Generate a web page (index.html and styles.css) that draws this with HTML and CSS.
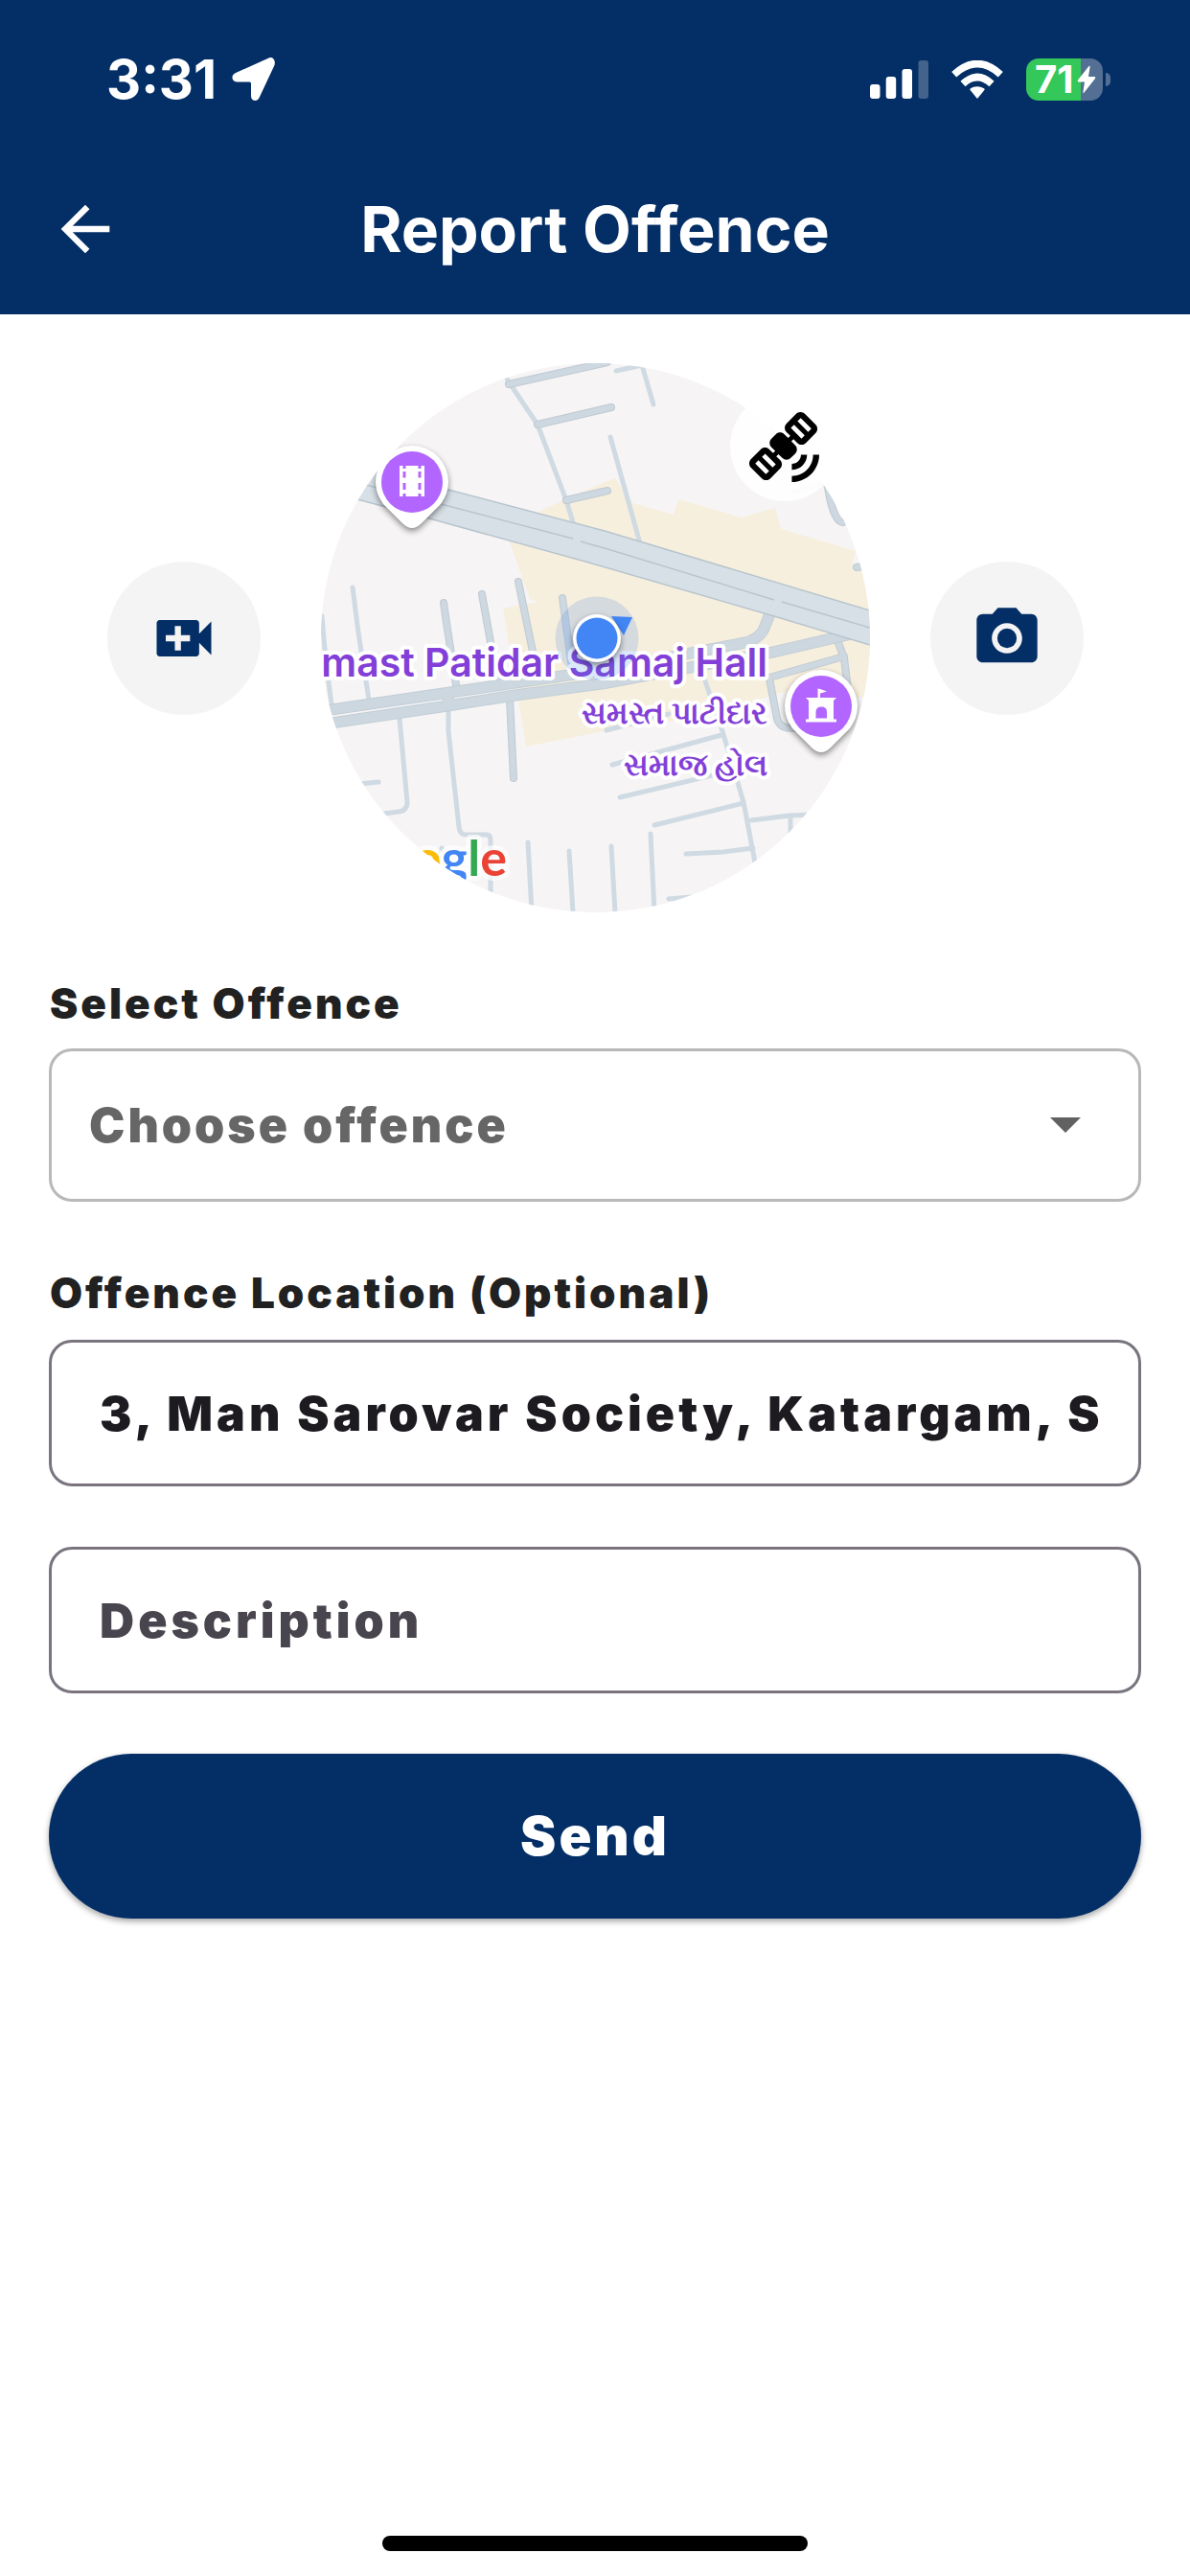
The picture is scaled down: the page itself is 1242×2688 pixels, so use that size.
FILE: index.html
```html
<!DOCTYPE html>
<html lang="en">
<head>
    <meta charset="UTF-8">
    <meta name="viewport" content="width=device-width, initial-scale=1.0">
    <title>Report Offence</title>
    <link rel="stylesheet" href="styles.css">
</head>
<body>
    <header class="top">
        <div class="status-bar">
            <div class="status-left">
                <span class="time">3:31</span>
                <svg class="location-icon" viewBox="0 0 45 45" width="45" height="45" aria-hidden="true">
                    <path d="M37.500 1 Q41-1 43.500 1.500 Q45.500 4 44.500 8 L29 41 Q27.500 45 24 45 Q20 44.500 20 40 V27 Q20 25.500 18.500 25.500 H5 Q1 25 0.500 21.500 Q0 18 4 16 Z" fill="#fff"/>
                </svg>
            </div>
            <div class="status-right">
                <svg viewBox="0 0 61 40" width="61" height="40" aria-hidden="true">
                    <rect x="0" y="25" width="10.500" height="15" rx="3" fill="#fff"/>
                    <rect x="16.700" y="17" width="10.500" height="23" rx="3" fill="#fff"/>
                    <rect x="33.500" y="9" width="10.500" height="31" rx="3" fill="#fff"/>
                    <rect x="50.500" y="0" width="10.500" height="40" rx="3" fill="#fff" opacity="0.250"/>
                </svg>
                <svg viewBox="0 0 54 40" width="54" height="40" aria-hidden="true">
                    <path d="M27 40 L19.600 31 Q19 30 20 29.300 Q27 25 34 29.300 Q35 30 34.400 31 Z" fill="#fff"/>
                    <path d="M12 24.500 Q27 10.500 42 24.500" fill="none" stroke="#fff" stroke-width="7.500"/>
                    <path d="M2.700 14.700 Q27 -7.500 51.300 14.700" fill="none" stroke="#fff" stroke-width="7.500"/>
                </svg>
                <div class="battery">
                    <div class="battery-body">
                        <span>71</span>
                        <svg viewBox="0 0 20 30" width="20" height="30" aria-hidden="true">
                            <path d="M12.500 1 Q14 0 13.500 2.500 L12 12 H18.500 Q20 12.500 19 14 L7.500 28.500 Q6 30 6.500 27.500 L8 17.500 H1.500 Q0 17 1 15.500 Z" fill="#fff"/>
                        </svg>
                    </div>
                    <div class="battery-cap"></div>
                </div>
            </div>
        </div>
        <div class="app-bar">
            <button class="back-btn" type="button" aria-label="Back">
                <svg viewBox="0 0 24 24" width="76" height="76"><path d="M20 11H7.830l5.590-5.590L12 4l-8 8 8 8 1.410-1.410L7.830 13H20v-2z" fill="#fff"/></svg>
            </button>
            <h1>Report Offence</h1>
        </div>
    </header>

    <main>
        <div class="capture-row">
            <button class="round-btn" type="button" aria-label="Record video">
                <svg viewBox="0 0 24 24" width="76" height="76">
                    <path fill="#042f66" fill-rule="evenodd" d="M17 10.500V7c0-.55-.45-1-1-1H4c-.55 0-1 .45-1 1v10c0 .55.45 1 1 1h12c.55 0 1-.45 1-1v-3.500l4 4v-11l-4 4zM14 13h-3v3H9v-3H6v-2h3V8h2v3h3v2z"/>
                </svg>
            </button>

            <div class="map-wrap">
                <svg class="map" viewBox="0 0 573 573" role="img" aria-label="Map of current location">
                    <rect width="573" height="573" fill="#f6f4f5"/>
                    <path fill="#f7efdd" d="M229 154 L296 124 L307 120 L325 146 L368 158 L373 142 L439 161 L474 151 L480 173 L558 196 L554 211 L573 216 V349 L483 343 L403 368 L296 384 L214 400 L190 256 L227 249 L218 246 L197 187 Z"/>

                    <!-- side streets -->
                    <g class="street">
                        <path d="M194 16 L199 24 L226 64 L256 143 L263 166"/>
                        <path d="M308 8 L335 2 L347 43"/>
                        <path d="M302 77 L333 188"/>
                        <path d="M33 234 L39 281 L50 351"/>
                        <path d="M1 264 L5 310 L11 356"/>
                        <path d="M82 371 L90 458 Q90 467 81 468 L66 470"/>
                        <path d="M40 439 L60 437"/>
                        <path d="M133 353 V384 L144 484 Q145 492 151 492 H173 Q177 492 177 498 V555"/>
                        <path d="M216 500 L220 573"/>
                        <path d="M259 509 L263 573"/>
                        <path d="M126 506 L122 520"/>
                        <path d="M399 326 L419 384 L441 458 L453 521 V540"/>
                        <path d="M304 419 L418 388"/>
                        <path d="M312 453 L430 425"/>
                        <path d="M298 383 L363 366"/>
                        <path d="M348 482 L441 459"/>
                        <path d="M344 491 L348 573"/>
                        <path d="M303 504 L307 573"/>
                        <path d="M381 512 L420 510 L451 506"/>
                        <path d="M449 477 L489 472 L515 471 M490 472 V495"/>
                        <path d="M363 559 L386 557"/>
                        <path d="M493 134 L521 126 M471 69 L483 111"/>
                    </g>
                    <g class="lane-edge">
                        <path id="lanes" d="M196 22 L299 -1 M226 64 L303 46 M256 143 L299 133 M128 250 L131 271 L142 342 M168 241 L177 291 L185 335 M206 228 L221 301 L225 330 M252 245 L262 318 M197 350 L201 433 M527 115 Q533 166 545 166 M559 213 L573 211 M468 328 L546 306 M539 289 L546 308 L550 340 M468 329 L476 371 Q479 382 495 381"/>
                    </g>
                    <use href="#lanes" class="lane"/>

                    <!-- twin road -->
                    <g class="road-edge">
                        <path id="twin" d="M0 363 L138 343 L296 320 L440 292 Q456 289 462 278 L470 258 M0 377 L129 358 L199 347 L296 334 L469 302 L556 282 M133 343 V358"/>
                    </g>
                    <use href="#twin" class="road"/>

                    <!-- highway -->
                    <path fill="#d8e0e7" d="M0 96 L133 132 L296 175 L573 258 V294 L473 264 L276 207 L113 162 L0 132 Z"/>
                    <path fill="none" stroke="#b8c5ce" stroke-width="1.500" d="M0 96 L133 132 L296 175 L573 258 M0 132 L113 162 L276 207 L473 264 L573 294 M0 115 L133 149 L263 183 M271 186 L296 193 L473 247 M481 249 L573 276"/>

                    <!-- place names -->
                    <text class="place" x="466" y="327">Samast Patidar Samaj Hall</text>
                    <text class="place place-gu" x="466" y="376">સમસ્ત પાટીદાર</text>
                    <text class="place place-gu" x="466" y="430">સમાજ હોલ</text>
                    <text class="logo" x="194" y="535"><tspan fill="#4285f4">G</tspan><tspan fill="#ea4335">o</tspan><tspan fill="#fbbc05">o</tspan><tspan fill="#4285f4">g</tspan><tspan fill="#34a853">l</tspan><tspan fill="#ea4335">e</tspan></text>

                    <!-- current position -->
                    <circle cx="288" cy="287" r="43.500" fill="#4a86e8" fill-opacity="0.200"/>
                    <path d="M303 264 L325 265 L316 284 Z" fill="#4285f4"/>
                    <circle class="shadowed" cx="288" cy="287" r="25" fill="#fff"/>
                    <circle cx="288" cy="287" r="21.500" fill="#4285f4"/>

                    <g transform="translate(95 124)">
                        <path class="shadowed" d="M-38 0 A38 38 0 0 1 38 0 Q38 12 30 23 L10 43 Q0 53 -10 43 L-30 23 Q-38 12 -38 0 Z" fill="#fff"/>
                        <circle r="32" fill="#b366ff"/>
                        <path fill="#fff" d="M-13 -17 H-9.500 V-14 H-6.500 V-17 H6.500 V-14 H9.500 V-17 H13 V15 H9.500 V12 H6.500 V15 H-6.500 V12 H-9.500 V15 H-13 Z"/>
                        <path fill="#b366ff" d="M-9.500 -11 h3 v6.500 h-3 z M-9.500 1 h3 v7 h-3 z M6.500 -11 h3 v6.500 h-3 z M6.500 1 h3 v7 h-3 z"/>
                    </g>
                    <g transform="translate(522 358)">
                        <path class="shadowed" d="M-38 0 A38 38 0 0 1 38 0 Q38 12 30 23 L10 43 Q0 53 -10 43 L-30 23 Q-38 12 -38 0 Z" fill="#fff"/>
                        <circle r="32" fill="#b366ff"/>
                        <path fill="#fff" d="M-3.500 -9 V-18.500 L-1 -18 L6 -15.500 L-1 -13.500 V-9 H16 L13 -6 V13.500 H16 V16.500 H-16 V13.500 H-13 V-6 L-16 -9 Z"/>
                        <path fill="#b366ff" d="M-5.500 12.500 V6 Q-5.500 0.500 0.300 0.500 Q6 0.500 6 6 V12.500 Z"/>
                    </g>
                </svg>
                <button class="satellite-btn" type="button" aria-label="Satellite view">
                    <svg viewBox="0 0 23 23" width="73" height="73">
                        <path d="M21 14h2c0 4.970-4.030 9-9 9v-2c3.870 0 7-3.130 7-7z M14 17v2c2.760 0 5-2.240 5-5h-2c0 1.660-1.340 3-3 3z M18.260.59l3.540 3.540c.78.78.78 2.050 0 2.830l-3.180 3.180c-.78.78-2.050.78-2.830 0L14.550 8.900l-.71.7 1.240 1.240c.78.78.78 2.050 0 2.830l-1.410 1.410c-.78.78-2.050.78-2.830 0L9.600 13.840l-.71.71 1.240 1.240c.78.78.78 2.050 0 2.830L6.950 21.800c-.78.78-2.050.78-2.830 0L.58 18.260c-.78-.78-.78-2.050 0-2.830l3.180-3.180c.78-.78 2.050-.78 2.830 0l1.240 1.240.71-.71L7.300 11.550c-.78-.78-.78-2.050 0-2.830L8.720 7.300c.78-.78 2.050-.78 2.830 0l1.240 1.240.71-.71L12.260 6.600c-.78-.78-.78-2.050 0-2.830L15.440.59c.77-.79 2.040-.79 2.820 0z"/>
                        <path d="M14.200 4.700l3.500 3.500 M16.400 2.500l3.500 3.500 M2.500 16.400l3.500 3.500 M4.700 14.200l3.500 3.500" stroke="#fff" stroke-width="1.500"/>
                    </svg>
                </button>
            </div>

            <button class="round-btn" type="button" aria-label="Take photo">
                <svg viewBox="0 0 24 24" width="76" height="76">
                    <circle cx="12" cy="12" r="3.200" fill="#042f66"/>
                    <path fill="#042f66" d="M9 2L7.170 4H4c-1.100 0-2 .9-2 2v12c0 1.100.9 2 2 2h16c1.100 0 2-.9 2-2V6c0-1.100-.9-2-2-2h-3.170L15 2H9zm3 15c-2.760 0-5-2.240-5-5s2.240-5 5-5 5 2.240 5 5-2.240 5-5 5z"/>
                </svg>
            </button>
        </div>

        <form class="report-form" onsubmit="return false">
            <div class="field">
                <label for="offence">Select Offence</label>
                <div class="select-wrap">
                    <select id="offence">
                        <option selected>Choose offence</option>
                    </select>
                    <svg viewBox="0 0 32 16" width="32" height="16" aria-hidden="true"><path d="M0 0h32L16 16z" fill="#616161"/></svg>
                </div>
            </div>
            <div class="field field-location">
                <label for="location">Offence Location (Optional)</label>
                <input id="location" type="text" value="3, Man Sarovar Society, Katargam, S">
            </div>
            <input id="description" type="text" placeholder="Description" aria-label="Description">
            <button class="send-btn" type="submit">Send</button>
        </form>
    </main>

    <div class="home-indicator"></div>
</body>
</html>
```
FILE: styles.css
```css
* {
    margin: 0;
    padding: 0;
    box-sizing: border-box;
}

body {
    min-height: 100vh;
    display: flex;
    flex-direction: column;
    background: #fff;
    color: #212121;
    font-family: Inter, "Liberation Sans", sans-serif;
}

svg {
    display: block;
}

button {
    border: none;
    cursor: pointer;
    font-family: inherit;
}

/* Header */
.top {
    background: #042f66;
    color: #fff;
    padding-bottom: 51px;
}

.status-bar {
    display: flex;
    justify-content: space-between;
    align-items: center;
    height: 165px;
    padding: 0 83px 0 111px;
}

.status-left,
.status-right,
.battery {
    display: flex;
    align-items: center;
}

.status-left {
    gap: 16px;
}

.status-right {
    gap: 24px;
}

.time {
    font-size: 56px;
    font-weight: 700;
    line-height: 64px;
}

.battery {
    gap: 3px;
}

.battery-body {
    display: flex;
    align-items: center;
    gap: 3px;
    width: 80px;
    height: 44px;
    padding-left: 9px;
    border-radius: 13px;
    background: linear-gradient(to right, #34c759 71%, #536f94 71%);
    font-size: 40px;
    font-weight: 700;
    line-height: 44px;
}

.battery-cap {
    width: 5px;
    height: 14px;
    border-radius: 0 7px 7px 0;
    background: #536f94;
}

.app-bar {
    display: grid;
    grid-template-columns: 76px 1fr 76px;
    align-items: center;
    padding: 36px 51px 0;
}

.back-btn {
    background: none;
}

h1 {
    font-size: 66px;
    font-weight: 700;
    line-height: 76px;
    text-align: center;
}

/* Map and camera buttons */
main {
    padding: 51px;
}

.capture-row {
    display: flex;
    justify-content: center;
    align-items: center;
    gap: 63px;
}

.round-btn {
    display: grid;
    place-items: center;
    width: 160px;
    height: 160px;
    border-radius: 50%;
    background: #f4f4f4;
}

.map-wrap {
    position: relative;
    width: 573px;
}

.map {
    width: 100%;
    border-radius: 50%;
}

.satellite-btn {
    position: absolute;
    top: 30px;
    right: 32px;
    display: grid;
    place-items: center;
    width: 114px;
    height: 114px;
    border-radius: 50%;
    background: rgba(255, 255, 255, 0.9);
}

.street {
    fill: none;
    stroke: #cfdae3;
    stroke-width: 5;
    stroke-linecap: round;
    stroke-linejoin: round;
}

.lane-edge,
.lane {
    fill: none;
    stroke: #c0cad3;
    stroke-width: 8;
    stroke-linecap: round;
    stroke-linejoin: round;
}

.lane {
    stroke: #cdd8e0;
    stroke-width: 6;
}

.road-edge,
.road {
    fill: none;
    stroke: #c2ced6;
    stroke-width: 12;
}

.road {
    stroke: #cdd7df;
    stroke-width: 10;
}

.place {
    fill: #8340d8;
    stroke: #fff;
    stroke-width: 8;
    stroke-linejoin: round;
    paint-order: stroke;
    text-anchor: end;
    font-size: 41px;
    font-weight: 600;
}

.place-gu {
    font-size: 32px;
    font-weight: 700;
}

.logo {
    font-family: Lato, sans-serif;
    font-size: 52px;
    font-weight: 700;
    text-anchor: end;
    stroke: rgba(255, 255, 255, 0.7);
    stroke-width: 10;
    stroke-linejoin: round;
    paint-order: stroke;
}

.shadowed {
    filter: drop-shadow(0 3px 3px rgba(0, 0, 0, 0.45));
}

/* Form */
.report-form {
    display: flex;
    flex-direction: column;
    margin-top: 66px;
}

label {
    display: block;
    margin-bottom: 18px;
    padding-left: 1px;
    font-size: 44px;
    font-weight: 900;
    line-height: 58px;
    letter-spacing: 3px;
}

.field-location {
    margin: 66px 0 63px;
}

.field-location label {
    margin-bottom: 20px;
}

select,
input {
    width: 100%;
    border: 3px solid #79747e;
    border-radius: 24px;
    background: #fff;
    font-family: inherit;
    font-size: 50px;
    font-weight: 900;
    letter-spacing: 4px;
    outline: none;
}

input {
    height: 153px;
    padding: 0 33px 0 50px;
    color: #1d1b20;
}

input::placeholder {
    color: #49454f;
    opacity: 1;
}

.select-wrap {
    display: grid;
    align-items: center;
}

.select-wrap > * {
    grid-area: 1 / 1;
}

.select-wrap svg {
    justify-self: end;
    margin-right: 63px;
    pointer-events: none;
}

select {
    appearance: none;
    height: 160px;
    padding: 0 96px 0 39px;
    border-color: #b8b8b8;
    color: #666;
    letter-spacing: 3px;
}

.send-btn {
    height: 172px;
    margin-top: 63px;
    border-radius: 86px;
    background: #042f66;
    box-shadow: 0 3px 6px rgba(0, 0, 0, 0.35);
    color: #fff;
    font-size: 56px;
    font-weight: 900;
    letter-spacing: 3px;
}

.home-indicator {
    align-self: center;
    width: 444px;
    height: 16px;
    margin: auto 0 26px;
    border-radius: 8px;
    background: #000;
}
```
